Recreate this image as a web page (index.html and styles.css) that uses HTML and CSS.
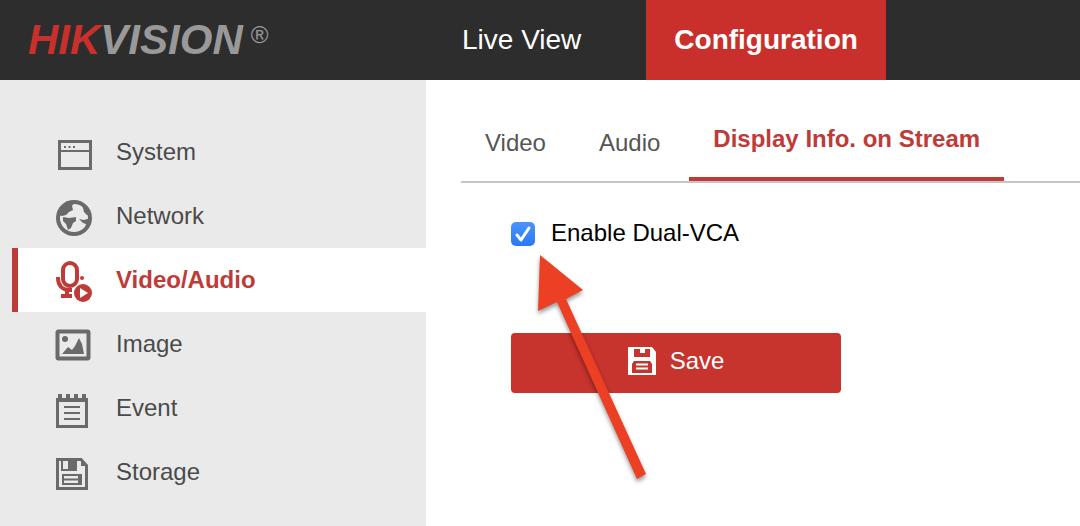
FILE: index.html
```html
<!DOCTYPE html>
<html lang="en">
<head>
  <meta charset="utf-8">
  <title>Configuration</title>
  <link rel="stylesheet" href="styles.css">
</head>
<body>
  <header class="header">
    <a class="logo" href="#"><span class="logo-red">HIK</span>VISION<span class="reg">®</span></a>
    <nav class="nav">
      <a href="#">Live View</a>
      <a href="#" class="active">Configuration</a>
    </nav>
  </header>

  <div class="page">
    <nav class="sidebar">
      <a href="#">
        <svg class="icon" viewBox="0 0 40 40" fill="none" stroke="currentColor">
          <rect x="5.5" y="7.5" width="31" height="27" stroke-width="3"/>
          <path d="M6 17h30" stroke-width="2"/>
          <path d="M10 13h2m2.500 0h2m2.500 0h2" stroke-width="2"/>
        </svg>
        System
      </a>
      <a href="#">
        <svg class="icon" viewBox="0 0 40 40" fill="currentColor">
          <circle cx="20" cy="20" r="16" fill="none" stroke="currentColor" stroke-width="4"/>
          <path d="M4 17L6 9l7-6 8 1-3 4 1 4-4 2-3 3-4 1z"/>
          <path d="M9 19l6 1 7-1v4l-3 2-2 5-3 2-2-6-3-3z"/>
          <path d="M26 5l7 5 4 8-4-1-3-3-1-4zM25 21l5 1 7-2-1 6-5 5 1-5-3-1z"/>
        </svg>
        Network
      </a>
      <a href="#" class="active">
        <svg class="icon" viewBox="0 0 40 40" fill="none" stroke="currentColor">
          <rect x="9" y="1" width="14" height="23" rx="7" stroke-width="4"/>
          <path d="M4 15v1c0 8 5 12 12 12h2M13 28v6M7 34h11" stroke-width="4"/>
          <circle cx="28" cy="16" r="2" fill="currentColor" stroke="none"/>
          <circle cx="29" cy="31" r="9" fill="currentColor" stroke="none"/>
          <path d="M26 26l8 5-8 5z" fill="#fff" stroke="none"/>
        </svg>
        Video/Audio
      </a>
      <a href="#">
        <svg class="icon" viewBox="0 0 40 40" fill="currentColor">
          <rect x="3.500" y="5.500" width="31" height="27" rx="1" fill="none" stroke="currentColor" stroke-width="4"/>
          <circle cx="11" cy="13" r="3"/>
          <path d="M8 28l6-7 4 3 3-4 4-8 3 6 2 10z"/>
        </svg>
        Image
      </a>
      <a href="#">
        <svg class="icon" viewBox="0 0 40 40" fill="none" stroke="currentColor">
          <rect x="3.500" y="9.500" width="29" height="27" stroke-width="3"/>
          <path d="M2 10h32" stroke-width="4"/>
          <path d="M6 4v5m8-5v5m8-5v5m8-5v5" stroke-width="4"/>
          <path d="M10 17h16M10 23h16M10 29h16" stroke-width="2"/>
        </svg>
        Event
      </a>
      <a href="#">
        <svg class="icon" viewBox="0 0 40 40" fill="none" stroke="currentColor">
          <path d="M3.500 5.500H27l5.500 6v23h-29z" stroke-width="3"/>
          <path d="M27 5v7h6z" fill="currentColor" stroke="none"/>
          <path d="M8 5v11h14V5" stroke-width="2"/>
          <path d="M14 5h8v11h-8z" fill="currentColor" stroke="none"/>
          <path d="M9 21h18v9H9zM9 25.500h16" stroke-width="2"/>
          <path d="M26 20v11" stroke-width="4"/>
        </svg>
        Storage
      </a>
    </nav>

    <main class="content">
      <nav class="tabs">
        <a href="#">Video</a>
        <a href="#">Audio</a>
        <a href="#" class="active">Display Info. on Stream</a>
      </nav>

      <form class="settings">
        <div class="option">
          <span class="check">
            <input type="checkbox" id="dual-vca" checked>
            <svg class="tick" viewBox="0 0 24 24" fill="none" stroke="#fff" stroke-width="3" stroke-linecap="round" stroke-linejoin="round">
              <path d="M6 13l4 5 8-12"/>
            </svg>
          </span>
          <label for="dual-vca">Enable Dual-VCA</label>
        </div>
        <button type="button" class="save">
          <svg class="save-icon" viewBox="0 0 28 28">
            <path d="M0 0h24l4 5v23H0z" fill="#fff"/>
            <path d="M6 2h6v4h5V2h5v8H6zM4 26V17l2-3h16l2 3v9z" fill="currentColor"/>
            <path d="M8 17.500h12M8 21.500h12" stroke="#fff" stroke-width="2"/>
          </svg>
          Save
        </button>
      </form>

      <!-- pointer to the option -->
      <svg class="arrow" viewBox="0 0 120 240">
        <path d="M10 10L53 45 36 54 116 229 107 234 27 57 8 66z" fill="#eb4024"/>
      </svg>
    </main>
  </div>
</body>
</html>
```

FILE: styles.css
```css
body {
  margin: 0;
  font-family: "Liberation Sans", Arial, sans-serif;
  font-size: 24px;
  background: #fff;
  color: #000;
}
a {
  color: inherit;
  text-decoration: none;
}

.header {
  display: flex;
  height: 80px;
  background: #2d2d2d;
  color: #fff;
}
.logo {
  box-sizing: border-box;
  width: 434px;
  padding-left: 28px;
  line-height: 80px;
  font-size: 42px;
  font-weight: bold;
  font-style: italic;
  color: #999;
}
.logo-red { color: #c9302c; }
.reg {
  margin-left: 8px;
  font-size: 24px;
  font-weight: normal;
  font-style: normal;
  vertical-align: top;
  line-height: 70px;
}
.nav {
  display: flex;
  gap: 37px;
}
.nav a {
  padding: 0 28px;
  font-size: 28px;
  line-height: 80px;
}
.nav .active {
  background: #c9302c;
  font-weight: bold;
}

.page {
  display: flex;
  min-height: calc(100vh - 80px);
}
.sidebar {
  box-sizing: border-box;
  flex: none;
  width: 426px;
  padding: 40px 0 20px 12px;
  background: #eaeaea;
  color: #4a4a4a;
}
.sidebar a {
  display: flex;
  align-items: center;
  gap: 22px;
  height: 64px;
  padding-left: 36px;
  border-left: 6px solid transparent;
}
.sidebar .active {
  background: #fff;
  border-color: #be3b38;
  color: #be3b38;
  font-weight: bold;
}
.icon {
  width: 40px;
  height: 40px;
  margin-top: 4px;
  color: #6a6a6a;
  overflow: visible;
}
.active .icon { color: #be3b38; }

.content {
  position: relative;
  flex: 1;
  padding: 21px 0 0 35px;
}
.tabs {
  display: flex;
  align-items: flex-end;
  gap: 5px;
  border-bottom: 2px solid #c6c6c6;
  color: #555;
}
.tabs a {
  padding: 0 24px;
  line-height: 76px;
  white-space: nowrap;
}
.tabs .active {
  border-bottom: 4px solid #be3b38;
  color: #be3b38;
  font-weight: bold;
}

.settings { padding: 36px 50px; }
.option {
  display: flex;
  align-items: center;
  gap: 16px;
  line-height: 28px;
}
.check {
  position: relative;
  width: 24px;
  height: 24px;
  margin-top: 2px;
}
.check input {
  appearance: none;
  display: block;
  width: 24px;
  height: 24px;
  margin: 0;
  border-radius: 5px;
  border: 1px solid #aaa;
}
.check input:checked {
  border: none;
  background: linear-gradient(#4a95fa, #2b78f6);
}
.tick {
  position: absolute;
  inset: 0;
  pointer-events: none;
}
.check input:not(:checked) + .tick { display: none; }

.save {
  display: flex;
  align-items: center;
  justify-content: center;
  gap: 14px;
  width: 330px;
  height: 60px;
  margin-top: 86px;
  padding: 0 0 4px;
  border: none;
  border-radius: 4px;
  background: #c7332d;
  color: #fff;
  font: inherit;
}
.save-icon {
  width: 28px;
  height: 28px;
  color: #c7332d;
}

.arrow {
  position: absolute;
  left: 104px;
  top: 165px;
  width: 120px;
  height: 240px;
  pointer-events: none;
  filter: drop-shadow(0 3px 2px rgba(0, 0, 0, 0.4));
}
```
